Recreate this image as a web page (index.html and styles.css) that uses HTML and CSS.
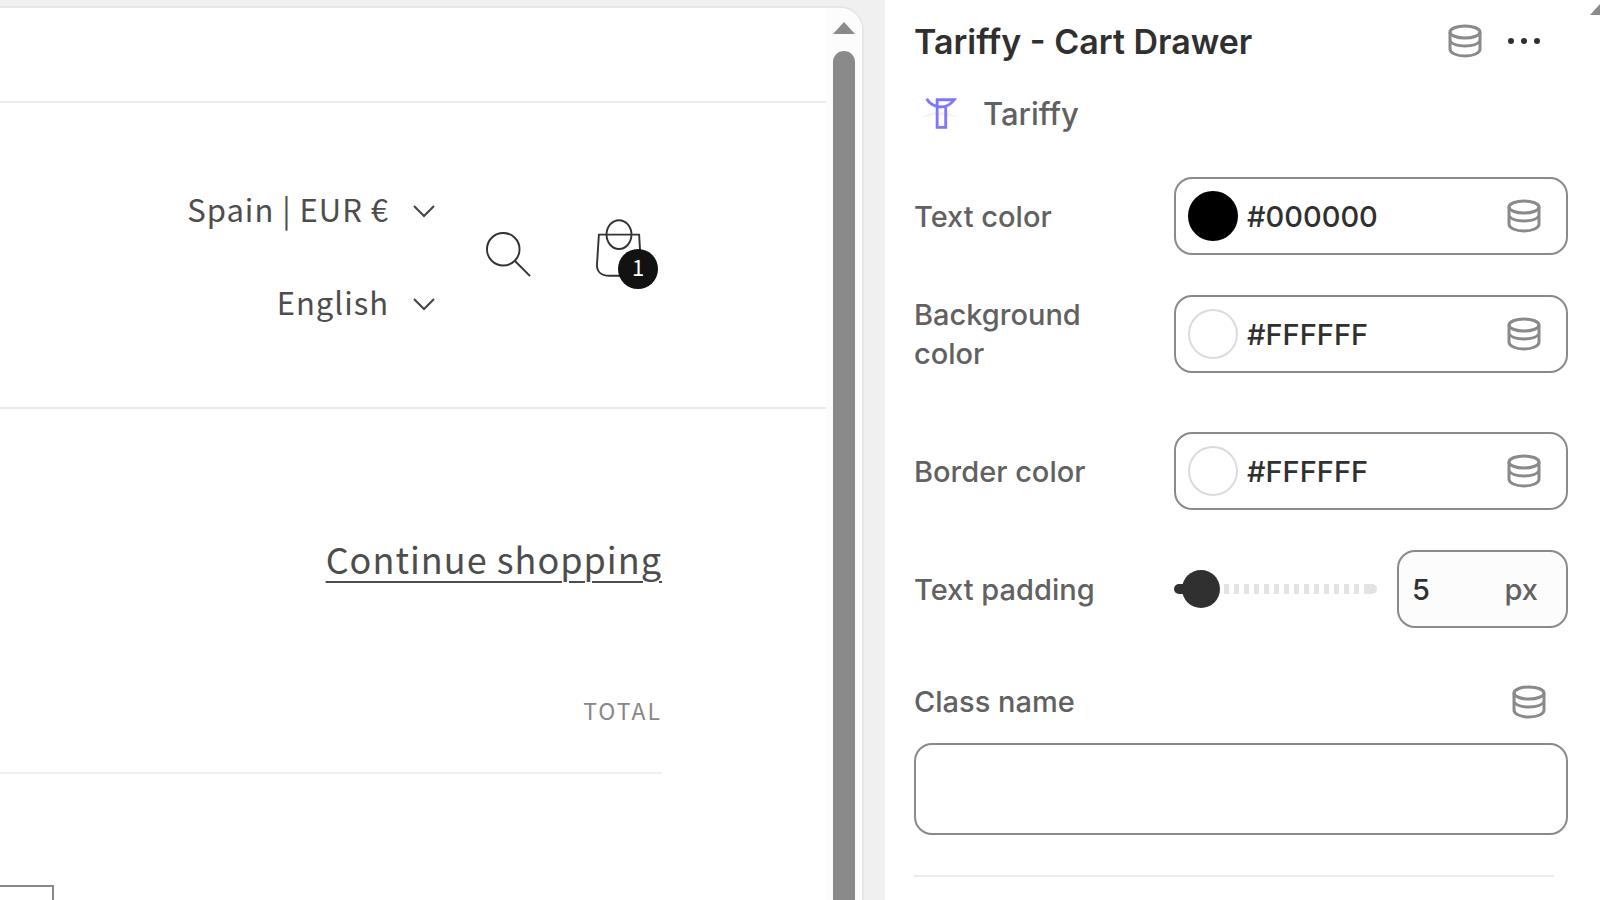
FILE: index.html
```
<!DOCTYPE html>
<html lang="en">
<head>
    <meta charset="UTF-8">
    <meta name="viewport" content="width=device-width, initial-scale=1.0">
    <title>Tariffy - Cart Drawer</title>
    <link rel="stylesheet" href="styles.css">
</head>
<body>
    <!-- icons shared by several controls -->
    <svg class="sprite" aria-hidden="true">
        <symbol id="icon-database" viewBox="0 0 34 34">
            <ellipse cx="17" cy="8" rx="15" ry="6"/>
            <path d="M2 8v17c0 4 6.500 7 15 7s15-3 15-7V8"/>
            <path d="M2 17c2.500 3.500 8 5 15 5s12.500-1.500 15-5"/>
        </symbol>
        <symbol id="icon-caret" viewBox="0 0 24 14">
            <path d="M2 2l10 10L22 2"/>
        </symbol>
    </svg>

    <main class="preview">
        <div class="store">
            <div class="announcement"></div>
            <header class="store-header">
                <div class="localization">
                    <button class="select-button">Spain | EUR € <svg class="caret"><use href="#icon-caret"/></svg></button>
                    <button class="select-button">English <svg class="caret"><use href="#icon-caret"/></svg></button>
                </div>
                <button class="icon-button" aria-label="Search">
                    <svg class="search-icon" viewBox="0 0 48 48"><circle cx="18" cy="18" r="17"/><path d="M30 30l16 16"/></svg>
                </button>
                <a class="cart" href="#" aria-label="Cart">
                    <svg class="bag-icon" viewBox="0 0 48 62"><path d="M3 17h42l2 34c0 5-5 9-11 9H14C6 60 1 56 1 49z"/><ellipse cx="24" cy="17" rx="13" ry="15"/></svg>
                    <span class="cart-count">1</span>
                </a>
            </header>
            <section class="cart-page">
                <a class="continue" href="#">Continue shopping</a>
                <div class="cart-head">Total</div>
                <div class="cart-item"></div>
            </section>
        </div>
        <div class="scrollbar">
            <div class="scroll-up"></div>
            <div class="scroll-thumb"></div>
        </div>
    </main>

    <aside class="settings">
        <div class="settings-scroll"></div>
        <div class="settings-header">
            <h1>Tariffy - Cart Drawer</h1>
            <button class="icon-button" aria-label="Connect dynamic source"><svg class="database"><use href="#icon-database"/></svg></button>
            <button class="icon-button" aria-label="More actions">
                <svg class="dots" viewBox="0 0 34 8"><circle cx="4" cy="4" r="3"/><circle cx="17" cy="4" r="3"/><circle cx="30" cy="4" r="3"/></svg>
            </button>
        </div>
        <div class="app">
            <svg class="app-logo" viewBox="0 0 40 34">
                <path class="wing" d="M1 21c10-8 26-9 37 0-10-4-27-4-37 0z"/>
                <path d="M6 1c5 9 20 13 29 1H17v29h9V10"/>
            </svg>
            <span>Tariffy</span>
        </div>

        <div class="row">
            <label for="text-color">Text color</label>
            <div class="field">
                <span class="swatch black"></span>
                <input id="text-color" type="text" value="#000000">
                <button class="icon-button" aria-label="Connect dynamic source"><svg class="database"><use href="#icon-database"/></svg></button>
            </div>
        </div>
        <div class="row two-line">
            <label for="background-color">Background color</label>
            <div class="field">
                <span class="swatch"></span>
                <input id="background-color" type="text" value="#FFFFFF">
                <button class="icon-button" aria-label="Connect dynamic source"><svg class="database"><use href="#icon-database"/></svg></button>
            </div>
        </div>
        <div class="row">
            <label for="border-color">Border color</label>
            <div class="field">
                <span class="swatch"></span>
                <input id="border-color" type="text" value="#FFFFFF">
                <button class="icon-button" aria-label="Connect dynamic source"><svg class="database"><use href="#icon-database"/></svg></button>
            </div>
        </div>
        <div class="row">
            <label for="text-padding">Text padding</label>
            <div class="range">
                <input id="text-padding" class="slider" type="range" min="0" max="100" value="5">
                <div class="field number">
                    <input type="text" value="5" aria-label="Text padding in pixels">
                    <span class="unit">px</span>
                </div>
            </div>
        </div>
        <div class="class-head">
            <label for="class-name">Class name</label>
            <button class="icon-button" aria-label="Connect dynamic source"><svg class="database"><use href="#icon-database"/></svg></button>
        </div>
        <input id="class-name" class="class-input" type="text">
        <hr>
    </aside>
</body>
</html>
```

FILE: styles.css
```
:root {
    --border: #8a8a8a;
    --label: #616161;
    --text: #303030;
    --line: #ebebeb;
}
* {
    box-sizing: border-box;
}
body {
    display: grid;
    grid-template-columns: minmax(0, 1fr) 715px;
    min-height: 100vh;
    margin: 0;
    background: #f0f0f0;
    color: var(--text);
    font-family: Inter, sans-serif;
    font-size: 29px;
    font-weight: 450;
    line-height: 39px;
    overflow: hidden;
}
button, input {
    margin: 0;
    padding: 0;
    border: none;
    background: none;
    color: inherit;
    font: inherit;
}
svg {
    display: block;
    fill: none;
}
.sprite {
    position: absolute;
    width: 0;
    height: 0;
}
.icon-button {
    display: flex;
}

/* store preview */
.preview {
    display: flex;
    height: calc(100vh - 6px);
    margin: 6px 21px 0 0;
    overflow: hidden;
    background: #fff;
    border: 2px solid #e6e6e6;
    border-width: 2px 2px 0 0;
    border-top-right-radius: 24px;
}
.store {
    flex: 1;
    color: #4d4d4d;
    font-family: "Noto Sans CJK SC", sans-serif;
    font-weight: 400;
    letter-spacing: 1px;
}
.announcement {
    height: 95px;
    border-bottom: 2px solid var(--line);
}
.store-header {
    display: flex;
    align-items: center;
    justify-content: flex-end;
    height: 306px;
    padding-right: 164px;
    border-bottom: 2px solid var(--line);
}
.localization {
    display: flex;
    flex-direction: column;
    align-items: flex-end;
    gap: 54px;
    margin-right: 50px;
}
.select-button {
    display: flex;
    align-items: center;
    gap: 23px;
    font-size: 31px;
    letter-spacing: inherit;
}
.caret {
    width: 24px;
    height: 14px;
    margin-top: 4px;
    stroke: #444;
    stroke-width: 2;
}
.search-icon {
    width: 46px;
    height: 46px;
    stroke: #333;
    stroke-width: 2;
}
.cart {
    position: relative;
    margin: 0 20px 14px 64px;
}
.bag-icon {
    width: 46px;
    height: 60px;
    stroke: #333;
    stroke-width: 2;
}
.cart-count {
    position: absolute;
    right: -16px;
    bottom: -11px;
    width: 40px;
    height: 40px;
    border-radius: 50%;
    background: #121212;
    color: #fff;
    font-size: 22px;
    line-height: 34px;
    letter-spacing: 0;
    text-align: center;
}
.cart-page {
    display: flex;
    flex-direction: column;
    padding-right: 164px;
}
.continue {
    align-self: flex-end;
    margin-top: 127px;
    color: inherit;
    font-size: 36px;
    line-height: 44px;
    text-underline-offset: 7px;
    text-decoration-thickness: 2px;
}
.cart-head {
    margin-top: 111px;
    padding-bottom: 42px;
    border-bottom: 2px solid #f0f0f0;
    color: #888;
    font-size: 23px;
    letter-spacing: 2px;
    text-align: right;
    text-transform: uppercase;
}
.cart-item {
    width: 54px;
    height: 100px;
    margin-top: 111px;
    border: 2px solid #888;
    border-left: none;
}
.scrollbar {
    display: flex;
    flex-direction: column;
    align-items: center;
    width: 36px;
    padding-top: 14px;
    background: #fcfcfc;
}
.scroll-up {
    border: 11px solid transparent;
    border-top: none;
    border-bottom: 12px solid #8a8a8a;
}
.scroll-thumb {
    flex: 1;
    width: 22px;
    margin-top: 17px;
    border-radius: 11px 11px 0 0;
    background: #8a8a8a;
}

/* settings panel */
.settings {
    position: relative;
    padding: 16px 32px 0 29px;
    background: #fff;
}
.settings-scroll {
    position: absolute;
    top: 3px;
    right: -12px;
    border: 11px solid transparent;
    border-top: none;
    border-bottom: 12px solid #8a8a8a;
}
.settings-header {
    display: flex;
    align-items: center;
    gap: 25px;
    height: 50px;
    padding-right: 27px;
}
h1 {
    flex: 1;
    margin: 0;
    font-size: 34px;
    font-weight: 600;
}
.database {
    width: 34px;
    height: 34px;
    stroke: #8a8a8a;
    stroke-width: 3;
}
.dots {
    width: 34px;
    height: 8px;
    fill: #303030;
}
.app {
    display: flex;
    align-items: center;
    gap: 24px;
    margin: 28px 0 44px;
    padding-left: 7px;
    color: var(--label);
    font-size: 31px;
}
.app-logo {
    width: 38px;
    height: 34px;
    stroke: #7b78ff;
    stroke-width: 3;
}
.app-logo .wing {
    fill: #fbeeee;
    stroke: none;
}
.row {
    display: grid;
    grid-template-columns: 200px minmax(0, 1fr);
    align-items: center;
    column-gap: 60px;
    margin-bottom: 40px;
}
.two-line {
    margin-bottom: 59px;
}
label {
    color: var(--label);
}
.field {
    display: flex;
    align-items: center;
    height: 78px;
    padding: 0 25px 0 12px;
    border: 2px solid var(--border);
    border-radius: 18px;
}
.field input {
    flex: 1;
    min-width: 0;
}
.swatch {
    width: 50px;
    height: 50px;
    margin-right: 9px;
    border: 2px solid #dcdcdc;
    border-radius: 50%;
}
.swatch.black {
    border-color: #000;
    background: #000;
}
.range {
    display: flex;
    align-items: center;
    gap: 20px;
}
.slider {
    flex: 1;
    min-width: 0;
    height: 38px;
    appearance: none;
}
/* dark start, solid end cap, ticks between */
.slider::-webkit-slider-runnable-track {
    height: 10px;
    border-radius: 5px;
    background:
        linear-gradient(#303030, #303030) 0 0 / 20px 10px no-repeat,
        linear-gradient(#e3e3e3, #e3e3e3) 100% 0 / 10px 10px no-repeat,
        repeating-linear-gradient(90deg, #e3e3e3 0 5px, transparent 5px 10px);
}
.slider::-webkit-slider-thumb {
    appearance: none;
    width: 38px;
    height: 38px;
    margin-top: -14px;
    border-radius: 50%;
    background: #303030;
}
.number {
    width: 171px;
    padding: 0 28px 0 13px;
    background: #fcfcfc;
}
.unit {
    color: var(--label);
}
.class-head {
    display: flex;
    align-items: center;
    justify-content: space-between;
    margin-top: 54px;
    padding-right: 22px;
}
.class-input {
    display: block;
    width: 100%;
    height: 92px;
    margin-top: 22px;
    padding: 0 16px;
    border: 2px solid var(--border);
    border-radius: 18px;
}
hr {
    margin: 40px 14px 0 0;
    border: none;
    border-top: 2px solid var(--line);
}
```
